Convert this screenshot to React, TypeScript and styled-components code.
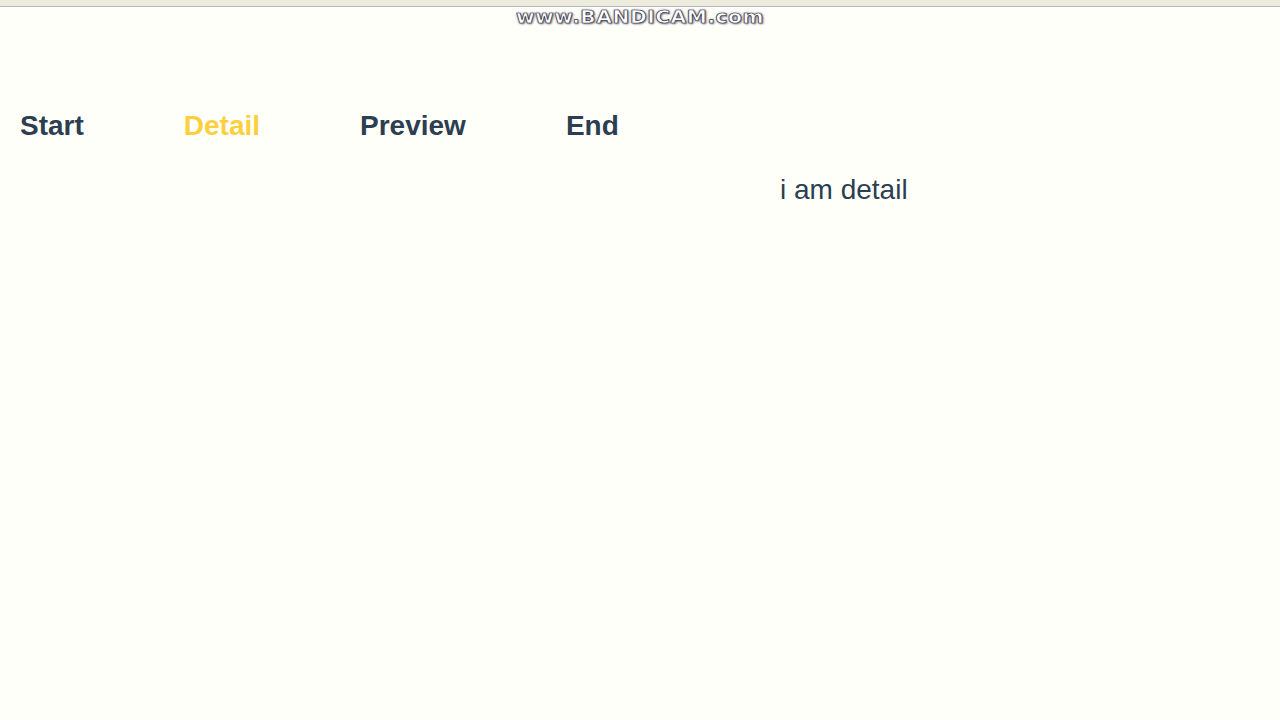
import React from "react";
import styled, { createGlobalStyle } from "styled-components";

const Global = createGlobalStyle`
  html, body { margin: 0; padding: 0; background: #fffffa; }
  body { font-family: "Liberation Sans", Arial, sans-serif; }
`;

const Page = styled.div`
  width: 1280px;
  height: 720px;
  background: #fffffa;
  display: flex;
  flex-direction: column;
  overflow: hidden;
`;

const TopStrip = styled.div`
  height: 6px;
  background: #ecebdc;
  border-bottom: 1px solid #b4b6c4;
`;

const Watermark = styled.div`
  display: flex;
  justify-content: center;
  height: 20px;
  font-family: "DejaVu Sans", sans-serif;
  font-weight: bold;
  font-size: 18px;
  line-height: 20px;
  color: #ffffff;
  letter-spacing: 0.5px;
  -webkit-text-stroke: 0.7px #3f3f50;
  text-shadow: 0 0 2px #555566, 1px 1px 2px #777788;
  transform: scaleX(1.12);
`;

const Nav = styled.nav`
  display: flex;
  gap: 100px;
  padding-left: 20px;
  margin-top: 83px;
  height: 32px;
`;

const NavLink = styled.a<{ $active?: boolean }>`
  font-size: 28px;
  font-weight: bold;
  line-height: 32px;
  color: ${(p) => (p.$active ? "#fad03e" : "#2c3e50")};
  text-decoration: none;
  cursor: pointer;
`;

const Content = styled.div`
  margin-top: 32px;
  padding-left: 780px;
  font-size: 28px;
  line-height: 32px;
  color: #2c3e50;
`;

export default function App() {
  return (
    <Page>
      <Global />
      <TopStrip />
      <Watermark>www.BANDICAM.com</Watermark>
      <Nav>
        <NavLink>Start</NavLink>
        <NavLink $active>Detail</NavLink>
        <NavLink>Preview</NavLink>
        <NavLink>End</NavLink>
      </Nav>
      <Content>i am detail</Content>
    </Page>
  );
}
